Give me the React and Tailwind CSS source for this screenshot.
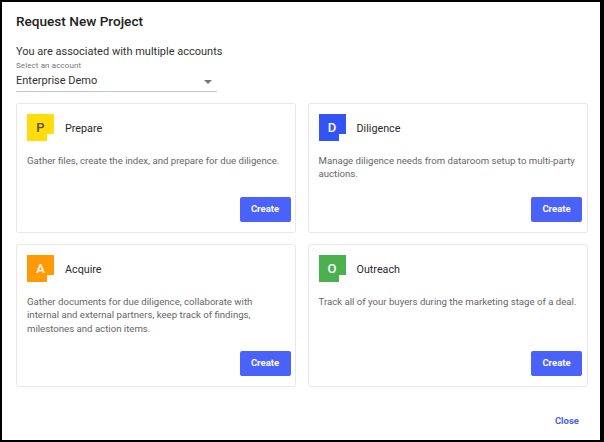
import React from "react"

const Badge = ({ letter, bg, fg }) => (
    <div className="relative w-[27px] h-[27px] shrink-0 font-medium">
        <svg width="27" height="27" viewBox="0 0 27 27" className="absolute inset-0">
            <path d="M0 0H27V20H20V27H0Z" fill={bg} />
        </svg>
        <span className={`absolute inset-0 flex items-center justify-center text-[13px] leading-none ${fg}`}>{letter}</span>
    </div>
)

const Card = ({ letter, bg, fg, title, children, h }) => (
    <div className={`flex flex-col rounded-[3px] border border-[#e8e8e8] bg-white pl-[10px] pr-[4.5px] pt-[10px] pb-[10px] ${h}`}>
        <div className="flex items-center gap-[11px]">
            <Badge letter={letter} bg={bg} fg={fg} />
            <span className="pt-[5px] text-[10.75px] text-[#2a2a2a]">{title}</span>
        </div>
        <p className="mt-[13px] pr-[4px] text-[9.65px] leading-[13.5px] text-[#666666]">{children}</p>
        <div className="mt-auto flex justify-end">
            <button className="w-[51px] h-[25px] rounded-[2px] bg-[#4a62fa] text-white text-[9.5px] font-bold">Create</button>
        </div>
    </div>
)

const App = () => {
    return (
        <div className="w-[604px] h-[442px] bg-white border-t-[2px] border-l-[2px] border-b-[2px] border-r-[4px] border-black pl-[14px] pr-[12px] pt-[10px] font-['Roboto',sans-serif] flex flex-col">
            <h1 className="text-[13.6px] leading-[18px] font-medium text-[#212121]">Request New Project</h1>
            <p className="mt-[15px] text-[11px] leading-[14px] text-[#333333]">You are associated with multiple accounts</p>
            <label className="mt-[2px] text-[8px] leading-[10px] text-[#777777] tracking-[0.1px]">Select an account</label>
            <div className="mt-[3px] w-[201px] h-[17.5px] border-b border-[#c4c4c4] flex items-start justify-between pr-[3px]">
                <span className="text-[11px] leading-[14px] text-[#333333]">Enterprise Demo</span>
                <svg width="8" height="4" viewBox="0 0 8 4" className="mt-[6px] mr-[2px]"><path d="M0 0H8L4 4Z" fill="#777777" /></svg>
            </div>
            <div className="mt-[11px] grid grid-cols-[280px_280px] gap-x-[11.5px] gap-y-[11px]">
                <Card h="h-[130px]" letter="P" bg="#ffdd0d" fg="text-[#57502a]" title="Prepare">
                    Gather files, create the index, and prepare for due diligence.
                </Card>
                <Card h="h-[130px]" letter="D" bg="#3354f4" fg="text-white" title="Diligence">
                    Manage diligence needs from dataroom setup to multi-party auctions.
                </Card>
                <Card h="h-[143px]" letter="A" bg="#ff9a05" fg="text-white" title="Acquire">
                    Gather documents for due diligence, collaborate with<br />
                    internal and external partners, keep track of findings,<br />
                    milestones and action items.
                </Card>
                <Card h="h-[143px]" letter="O" bg="#4caf50" fg="text-white" title="Outreach">
                    Track all of your buyers during the marketing stage of a deal.
                </Card>
            </div>
            <div className="mt-[27px] flex justify-end pr-[9px]">
                <button className="text-[9.5px] font-bold text-[#4a62e8]">Close</button>
            </div>
        </div>
    )
}

export default App
